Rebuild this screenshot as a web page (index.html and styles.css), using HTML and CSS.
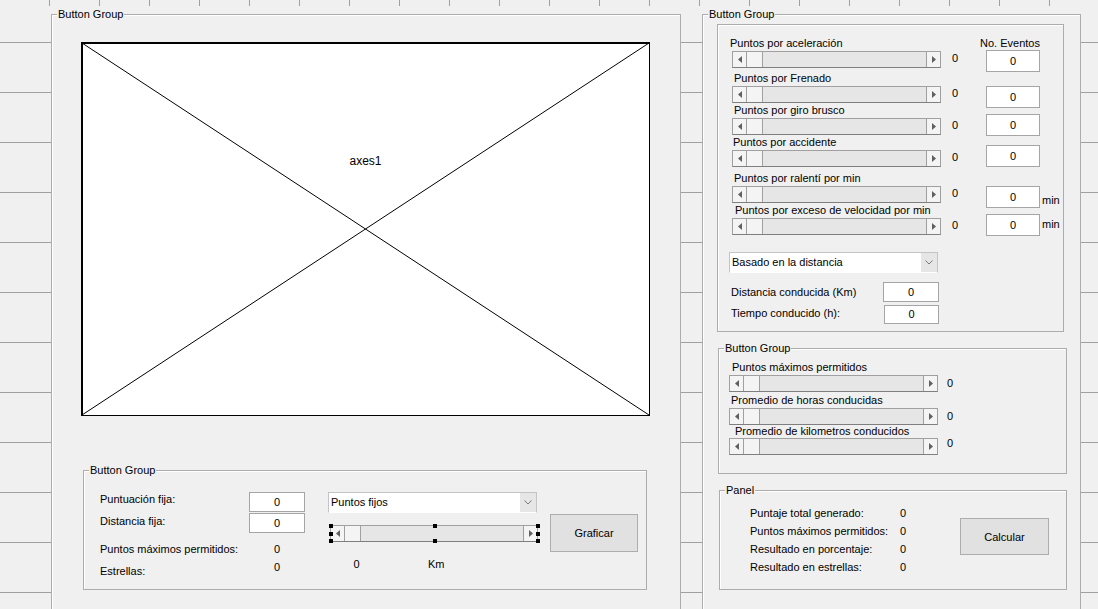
FILE: index.html
```html
<!DOCTYPE html>
<html lang="es">
<head>
<meta charset="utf-8">
<title>GUIDE</title>
<link rel="stylesheet" href="styles.css">
</head>
<body>
<div class="canvas">
  <div class="panel panel-left">
    <span class="ptitle">Button Group</span>
    <div class="axes">
      <svg class="axes-x" viewBox="0 0 100 100" preserveAspectRatio="none"><line x1="0" y1="0" x2="100" y2="100"/><line x1="100" y1="0" x2="0" y2="100"/></svg>
      <div class="axes-label">axes1</div>
    </div>
    <div class="group group-bl">
      <span class="ptitle">Button Group</span>
      <div class="bl-left">
        <div class="bl-row r1"><span class="bl-label">Puntuación fija:</span><span class="edit">0</span></div>
        <div class="bl-row r2"><span class="bl-label">Distancia fija:</span><span class="edit">0</span></div>
        <div class="bl-row r3"><span class="bl-label">Puntos máximos permitidos:</span><span class="val">0</span></div>
        <div class="bl-row r4"><span class="bl-label">Estrellas:</span><span class="val">0</span></div>
      </div>
      <div class="bl-mid">
        <div class="popup"><span class="popup-text">Puntos fijos</span><span class="popup-arrow"><svg width="8" height="5" viewBox="0 0 8 5"><polyline points="0.5,0.5 4,4 7.5,0.5"/></svg></span></div>
        <div class="sel">
          <div class="slider">
            <span class="sb sb-l"><svg width="4" height="7" viewBox="0 0 4 7"><polygon points="4,0 0,3.5 4,7"/></svg></span><span class="thumb"></span><span class="track"></span><span class="sb sb-r"><svg width="4" height="7" viewBox="0 0 4 7"><polygon points="0,0 4,3.5 0,7"/></svg></span>
          </div>
          <span class="h h-tl"></span><span class="h h-ml"></span><span class="h h-bl"></span>
          <span class="h h-tm"></span><span class="h h-bm"></span>
          <span class="h h-tr"></span><span class="h h-mr"></span><span class="h h-br"></span>
        </div>
        <div class="bl-units"><span class="u0">0</span><span class="ukm">Km</span></div>
      </div>
      <button class="btn btn-graf">Graficar</button>
    </div>
  </div>

  <div class="panel panel-right">
    <span class="ptitle">Button Group</span>
    <div class="group box1">
      <div class="srow r1">
        <span class="lbl">Puntos por aceleración</span><span class="hdr">No. Eventos</span>
        <div class="slider"><span class="sb sb-l"><svg width="4" height="7" viewBox="0 0 4 7"><polygon points="4,0 0,3.5 4,7"/></svg></span><span class="thumb"></span><span class="track"></span><span class="sb sb-r"><svg width="4" height="7" viewBox="0 0 4 7"><polygon points="0,0 4,3.5 0,7"/></svg></span></div>
        <span class="val">0</span><span class="edit">0</span>
      </div>
      <div class="srow r2">
        <span class="lbl">Puntos por Frenado</span>
        <div class="slider"><span class="sb sb-l"><svg width="4" height="7" viewBox="0 0 4 7"><polygon points="4,0 0,3.5 4,7"/></svg></span><span class="thumb"></span><span class="track"></span><span class="sb sb-r"><svg width="4" height="7" viewBox="0 0 4 7"><polygon points="0,0 4,3.5 0,7"/></svg></span></div>
        <span class="val">0</span><span class="edit">0</span>
      </div>
      <div class="srow r3">
        <span class="lbl">Puntos por giro brusco</span>
        <div class="slider"><span class="sb sb-l"><svg width="4" height="7" viewBox="0 0 4 7"><polygon points="4,0 0,3.5 4,7"/></svg></span><span class="thumb"></span><span class="track"></span><span class="sb sb-r"><svg width="4" height="7" viewBox="0 0 4 7"><polygon points="0,0 4,3.5 0,7"/></svg></span></div>
        <span class="val">0</span><span class="edit">0</span>
      </div>
      <div class="srow r4">
        <span class="lbl">Puntos por accidente</span>
        <div class="slider"><span class="sb sb-l"><svg width="4" height="7" viewBox="0 0 4 7"><polygon points="4,0 0,3.5 4,7"/></svg></span><span class="thumb"></span><span class="track"></span><span class="sb sb-r"><svg width="4" height="7" viewBox="0 0 4 7"><polygon points="0,0 4,3.5 0,7"/></svg></span></div>
        <span class="val">0</span><span class="edit">0</span>
      </div>
      <div class="srow r5">
        <span class="lbl">Puntos por ralentí por min</span>
        <div class="slider"><span class="sb sb-l"><svg width="4" height="7" viewBox="0 0 4 7"><polygon points="4,0 0,3.5 4,7"/></svg></span><span class="thumb"></span><span class="track"></span><span class="sb sb-r"><svg width="4" height="7" viewBox="0 0 4 7"><polygon points="0,0 4,3.5 0,7"/></svg></span></div>
        <span class="val">0</span><span class="edit">0</span><span class="unit">min</span>
      </div>
      <div class="srow r6">
        <span class="lbl">Puntos por exceso de velocidad por min</span>
        <div class="slider"><span class="sb sb-l"><svg width="4" height="7" viewBox="0 0 4 7"><polygon points="4,0 0,3.5 4,7"/></svg></span><span class="thumb"></span><span class="track"></span><span class="sb sb-r"><svg width="4" height="7" viewBox="0 0 4 7"><polygon points="0,0 4,3.5 0,7"/></svg></span></div>
        <span class="val">0</span><span class="edit">0</span><span class="unit">min</span>
      </div>
      <div class="popup popup-dist"><span class="popup-text">Basado en la distancia</span><span class="popup-arrow"><svg width="8" height="5" viewBox="0 0 8 5"><polyline points="0.5,0.5 4,4 7.5,0.5"/></svg></span></div>
      <div class="frow f1"><span class="flbl">Distancia conducida (Km)</span><span class="edit">0</span></div>
      <div class="frow f2"><span class="flbl">Tiempo conducido (h):</span><span class="edit">0</span></div>
    </div>

    <div class="group box2">
      <span class="ptitle">Button Group</span>
      <div class="b2row q1">
        <span class="lbl">Puntos máximos permitidos</span>
        <div class="slider"><span class="sb sb-l"><svg width="4" height="7" viewBox="0 0 4 7"><polygon points="4,0 0,3.5 4,7"/></svg></span><span class="thumb"></span><span class="track"></span><span class="sb sb-r"><svg width="4" height="7" viewBox="0 0 4 7"><polygon points="0,0 4,3.5 0,7"/></svg></span></div>
        <span class="val">0</span>
      </div>
      <div class="b2row q2">
        <span class="lbl">Promedio de horas conducidas</span>
        <div class="slider"><span class="sb sb-l"><svg width="4" height="7" viewBox="0 0 4 7"><polygon points="4,0 0,3.5 4,7"/></svg></span><span class="thumb"></span><span class="track"></span><span class="sb sb-r"><svg width="4" height="7" viewBox="0 0 4 7"><polygon points="0,0 4,3.5 0,7"/></svg></span></div>
        <span class="val">0</span>
      </div>
      <div class="b2row q3">
        <span class="lbl">Promedio de kilometros conducidos</span>
        <div class="slider"><span class="sb sb-l"><svg width="4" height="7" viewBox="0 0 4 7"><polygon points="4,0 0,3.5 4,7"/></svg></span><span class="thumb"></span><span class="track"></span><span class="sb sb-r"><svg width="4" height="7" viewBox="0 0 4 7"><polygon points="0,0 4,3.5 0,7"/></svg></span></div>
        <span class="val">0</span>
      </div>
    </div>

    <div class="group panel3">
      <span class="ptitle">Panel</span>
      <div class="p3grid">
        <span>Puntaje total generado:</span><span>0</span>
        <span>Puntos máximos permitidos:</span><span>0</span>
        <span>Resultado en porcentaje:</span><span>0</span>
        <span>Resultado en estrellas:</span><span>0</span>
      </div>
      <button class="btn btn-calc">Calcular</button>
    </div>
  </div>
</div>
</body>
</html>
```

FILE: styles.css
```css
* { box-sizing: border-box; }
html, body { margin: 0; padding: 0; }
body {
  width: 1098px;
  height: 609px;
  overflow: hidden;
  font-family: "Liberation Sans", Arial, sans-serif;
  font-size: 11px;
  color: #000;
  background-color: #f0f0f0;
  background-image:
    linear-gradient(to right, #a0a0a0 1px, transparent 1px),
    linear-gradient(to bottom, #a0a0a0 1px, transparent 1px);
  background-size: 50px 6px, 50px 50px;
  background-position: 49px 0, 0 42px;
  background-repeat: repeat-x, repeat;
}

.canvas {
  display: flex;
  align-items: flex-start;
  gap: 21px;
  padding: 14px 0 0 51px;
}

.panel, .group {
  position: relative;
  background: #f0f0f0;
  border: 1px solid #acacac;
  box-shadow: inset 1px 1px 0 #fff;
}
.panel-left { width: 630px; height: 620px; }
.panel-right { width: 379px; height: 620px; }

.ptitle {
  position: absolute;
  top: -7px;
  left: 5px;
  padding: 0 1px;
  line-height: 13px;
  background: #f0f0f0;
  white-space: nowrap;
}

/* axes */
.axes {
  position: relative;
  margin: 27px 0 0 29px;
  width: 569px;
  height: 374px;
  background: #fff;
  border: 1px solid #000;
  box-shadow: inset 1px 1px 0 #000;
}
.axes-x { position: absolute; left: 0; top: 0; width: 100%; height: 100%; }
.axes-x line { stroke: #000; stroke-width: 1; vector-effect: non-scaling-stroke; }
.axes-label {
  position: relative;
  padding-top: 111px;
  text-align: center;
  font-size: 12px;
  line-height: 14px;
}

/* common controls */
.edit {
  display: block;
  width: 56px;
  height: 20px;
  background: #fff;
  border: 1px solid #a5a5a5;
  text-align: center;
  line-height: 18px;
}
.val { line-height: 14px; }

.btn {
  font: inherit;
  color: #000;
  background: #e1e1e1;
  border: 1px solid #adadad;
  padding: 0;
}

.popup {
  display: flex;
  width: 209px;
  height: 21px;
  background: #fff;
  border: 1px solid #c4c4c4;
  border-bottom-color: #fff;
}
.popup-text { padding-left: 2px; line-height: 19px; white-space: nowrap; }
.popup-arrow {
  margin-left: auto;
  width: 16px;
  background: #e6e6e6;
  display: flex;
  align-items: center;
  justify-content: center;
}
.popup-arrow polyline { fill: none; stroke: #7a7a7a; stroke-width: 1; }

.slider {
  display: flex;
  height: 17px;
  width: 209px;
  background: #e6e6e6;
  border: 1px solid #a0a0a0;
  border-bottom-color: #7f7f7f;
}
.sb {
  width: 14px;
  background: #f4f4f4;
  display: flex;
  align-items: center;
  justify-content: center;
}
.sb polygon { fill: #606060; }
.sb-l { border-right: 1px solid #a0a0a0; }
.sb-r { border-left: 1px solid #a0a0a0; margin-left: auto; }
.thumb { width: 16px; background: #f4f4f4; border-right: 1px solid #a0a0a0; }
.track { flex: 1; }

/* bottom-left group */
.group-bl {
  margin: 54px 0 0 31px;
  width: 564px;
  height: 120px;
  display: flex;
  align-items: flex-start;
}
.bl-left { margin-left: 16px; padding-top: 21px; }
.bl-row { display: flex; align-items: flex-start; }
.bl-label { width: 149px; line-height: 14px; white-space: nowrap; }
.bl-row .val { width: 56px; text-align: center; }
.bl-row.r1 { height: 21px; }
.bl-row.r2 .bl-label { padding-top: 1px; }
.bl-row.r3 { margin-top: 9px; }
.bl-row.r4 { margin-top: 8px; }
.bl-row.r4 .val { margin-top: -4px; }

.bl-mid { margin-left: 23px; padding-top: 21px; width: 209px; }
.sel { position: relative; margin: 12px 0 0 2px; width: 208px; }
.sel .slider { width: 208px; }
.h { position: absolute; width: 4px; height: 4px; background: #000; }
.h-tl { top: -1px; left: -1px; }
.h-ml { top: calc(50% - 2px); left: -1px; }
.h-bl { bottom: -1px; left: -1px; }
.h-tm { top: -1px; left: calc(50% - 1px); }
.h-bm { bottom: -1px; left: calc(50% - 1px); }
.h-tr { top: -1px; right: -2px; }
.h-mr { top: calc(50% - 2px); right: -2px; }
.h-br { bottom: -1px; right: -2px; }
.bl-units { display: flex; margin-top: 15px; line-height: 14px; }
.u0 { width: 57px; text-align: center; }
.ukm { margin-left: 43px; }
.btn-graf { margin: 43px 0 0 13px; width: 88px; height: 38px; flex: none; }

/* right panel: box 1 */
.box1 {
  margin: 9px 0 0 14px;
  width: 347px;
  height: 308px;
  padding: 11px 0 0 14px;
}
.srow {
  display: grid;
  grid-template-columns: 209px 45px 54px auto;
  grid-template-rows: 15px 17px;
}
.srow .lbl { grid-column: 1 / 3; grid-row: 1; line-height: 15px; padding-left: 2px; white-space: nowrap; }
.srow .hdr { grid-column: 3 / 5; grid-row: 1; margin-left: -6px; line-height: 15px; white-space: nowrap; }
.srow .slider { grid-column: 1; grid-row: 2; }
.srow .val { grid-column: 2; grid-row: 2; padding-left: 11px; }
.srow .edit { grid-column: 3; grid-row: 2; width: 54px; height: 22px; line-height: 20px; align-self: start; }
.srow .unit { grid-column: 4; grid-row: 2; padding-left: 2px; line-height: 14px; align-self: start; }
.srow.r1 .lbl { padding-left: 0; margin-left: -2px; }
.srow.r1 .edit { margin-top: -1px; }
.srow.r2 { margin-top: 3px; }
.srow.r3 .edit { margin-top: -4px; }
.srow.r4 .lbl { padding-left: 1px; }
.srow.r4 .edit { margin-top: -5px; }
.srow.r5 { margin-top: 4px; }
.srow.r5 .unit { margin-top: 7px; }
.srow.r6 .lbl { padding-left: 3px; }
.srow.r6 .edit { margin-top: -4px; }
.srow.r6 .unit { margin-top: -1px; }

.popup-dist { margin: 17px 0 0 -3px; }
.frow { display: flex; align-items: flex-start; margin-left: -1px; }
.flbl { width: 152px; line-height: 14px; white-space: nowrap; }
.frow.f1 { margin-top: 9px; }
.frow.f1 .flbl { padding-top: 3px; }
.frow.f2 { margin-top: 3px; }
.frow.f2 .flbl { padding-top: 1px; }
.frow.f2 .edit { margin-left: 1px; width: 55px; height: 19px; line-height: 17px; }

/* right panel: box 2 */
.box2 {
  margin: 16px 0 0 15px;
  width: 349px;
  height: 126px;
  padding: 11px 0 0 10px;
}
.b2row {
  display: grid;
  grid-template-columns: 209px auto;
  grid-template-rows: 15px 17px;
}
.b2row .lbl { grid-column: 1 / 3; grid-row: 1; line-height: 15px; white-space: nowrap; }
.b2row .slider { grid-column: 1; grid-row: 2; }
.b2row .val { grid-column: 2; grid-row: 2; padding-left: 9px; margin-top: 1px; align-self: start; }
.b2row.q1 .lbl { padding-left: 3px; }
.b2row.q2 { margin-top: 1px; }
.b2row.q2 .lbl { padding-left: 2px; }
.b2row.q3 { grid-template-rows: 13px 17px; }
.b2row.q3 .lbl { padding-left: 6px; line-height: 13px; }
.b2row.q3 .val { margin-top: -2px; }

/* right panel: panel 3 */
.panel3 {
  margin: 16px 0 0 16px;
  width: 348px;
  height: 100px;
  display: flex;
  align-items: flex-start;
}
.p3grid {
  display: grid;
  grid-template-columns: 150px 20px;
  line-height: 18px;
  padding: 13px 0 0 30px;
  white-space: nowrap;
}
.btn-calc { margin: 27px 0 0 40px; width: 89px; height: 37px; flex: none; }
```
